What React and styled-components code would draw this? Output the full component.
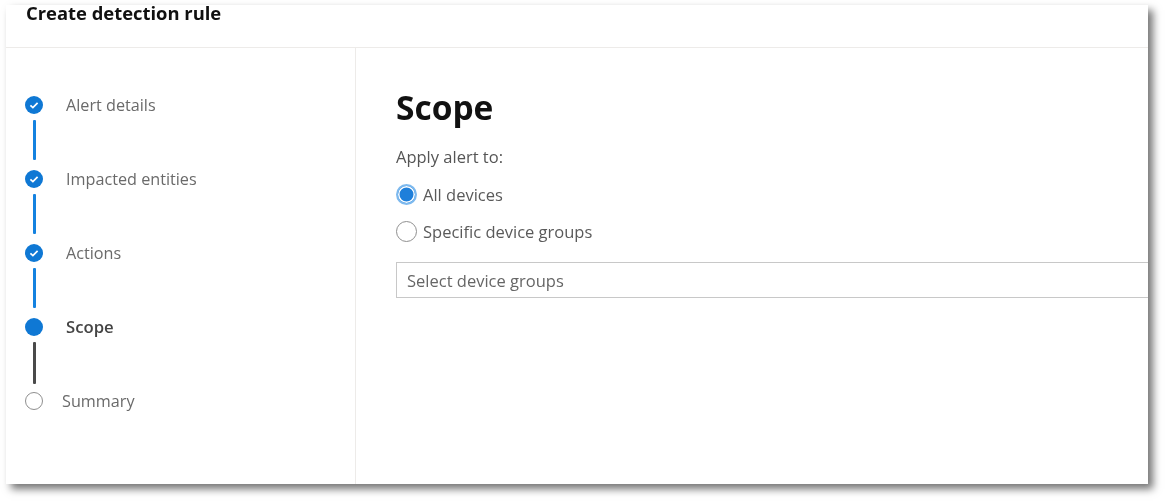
import styled, { createGlobalStyle } from 'styled-components'

const GlobalStyle = createGlobalStyle`
    html, body {
        margin: 0;
        padding: 0;
        background: #FFFFFF;
        overflow: hidden;
    }
`

const steps = [
    { label: 'Alert details', status: 'done' },
    { label: 'Impacted entities', status: 'done' },
    { label: 'Actions', status: 'done' },
    { label: 'Scope', status: 'current' },
    { label: 'Summary', status: 'todo' },
]

function StepIcon({ status }) {
    if (status === 'todo') return <SCHollowDot />
    return (
        <SCDot>
            {status === 'done' && (
                <svg width="12" height="12" viewBox="0 0 12 12" fill="none">
                    <path d="M2.4 6.3 L4.9 8.6 L9.6 3.8" stroke="#FFFFFF" strokeWidth="1.7" />
                </svg>
            )}
        </SCDot>
    )
}

export default function App() {
    return (
        <SCPage>
            <GlobalStyle />
            <SCCard>
                <SCHeader>Create detection rule</SCHeader>
                <SCBody>
                    <SCSidebar>
                        {steps.map((step, i) => (
                            <SCStep key={step.label}>
                                <SCMarker>
                                    <StepIcon status={step.status} />
                                    {i < steps.length - 1 && <SCLine $status={step.status} />}
                                </SCMarker>
                                <SCStepLabel $status={step.status}>{step.label}</SCStepLabel>
                            </SCStep>
                        ))}
                    </SCSidebar>
                    <SCMain>
                        <SCTitle>Scope</SCTitle>
                        <SCApply>Apply alert to:</SCApply>
                        <SCRadioRow>
                            <SCRadio $checked />
                            <SCRadioLabel>All devices</SCRadioLabel>
                        </SCRadioRow>
                        <SCRadioRow>
                            <SCRadio />
                            <SCRadioLabel>Specific device groups</SCRadioLabel>
                        </SCRadioRow>
                        <SCSelect>Select device groups</SCSelect>
                    </SCMain>
                </SCBody>
            </SCCard>
        </SCPage>
    )
}

const SCPage = styled.div`
    width: 1167px;
    height: 503px;
    box-sizing: border-box;
    padding: 5px 0 0 6px;
    font-family: 'Open Sans', 'Noto Sans', sans-serif;
`

const SCCard = styled.div`
    width: 1142px;
    height: 479px;
    display: flex;
    flex-direction: column;
    background: #FFFFFF;
    box-shadow: 5px 5px 8px rgba(0, 0, 0, 0.55);
`

const SCHeader = styled.div`
    height: 43px;
    flex-shrink: 0;
    box-sizing: border-box;
    padding-left: 20px;
    border-bottom: 1px solid #EDEBE9;
    font-size: 18.4px;
    font-weight: 700;
    line-height: 16px;
    color: #111111;
    filter: blur(0.5px);
`

const SCBody = styled.div`
    flex: 1;
    display: flex;
`

const SCSidebar = styled.div`
    width: 350px;
    flex-shrink: 0;
    box-sizing: border-box;
    border-right: 1px solid #EDEBE9;
    padding: 48px 0 0 19px;
    display: flex;
    flex-direction: column;
`

const SCStep = styled.div`
    display: flex;
    align-items: flex-start;
    height: 74px;
`

const SCMarker = styled.div`
    width: 18px;
    display: flex;
    flex-direction: column;
    align-items: center;
    gap: 6px;
`

const SCDot = styled.div`
    width: 18px;
    height: 18px;
    border-radius: 50%;
    background: #0F78D4;
    display: flex;
    align-items: center;
    justify-content: center;
`

const SCHollowDot = styled.div`
    width: 18px;
    height: 18px;
    box-sizing: border-box;
    border-radius: 50%;
    border: 1.5px solid #8F8F8F;
    background: #FFFFFF;
`

const SCLine = styled.div`
    width: 3px;
    height: ${props => (props.$status === 'current' ? '42px' : '40px')};
    border-radius: 1px;
    background: ${props => (props.$status === 'current' ? '#4A4A4A' : '#1482E0')};
`

const SCStepLabel = styled.div`
    margin-left: ${props => (props.$status === 'todo' ? '19px' : '23px')};
    font-size: ${props => (props.$status === 'current' ? '16.7px' : '16.2px')};
    line-height: 18px;
    font-weight: ${props => (props.$status === 'current' ? 600 : 400)};
    color: ${props => (props.$status === 'current' ? '#444444' : '#6A6A6A')};
    filter: blur(0.5px);
`

const SCMain = styled.div`
    flex: 1;
    min-width: 0;
    box-sizing: border-box;
    padding: 37px 0 0 40px;
    display: flex;
    flex-direction: column;
`

const SCTitle = styled.h1`
    margin: 0;
    font-size: 33.5px;
    font-weight: 700;
    line-height: 44px;
    color: #111111;
    filter: blur(0.4px);
`

const SCApply = styled.div`
    margin: 18px 0 9px;
    font-size: 16.5px;
    line-height: 20px;
    color: #555555;
    filter: blur(0.5px);
`

const SCRadioRow = styled.div`
    display: flex;
    align-items: center;
    height: 37px;
    gap: 6px;
`

const SCRadio = styled.div`
    width: 21px;
    height: 21px;
    box-sizing: border-box;
    border-radius: 50%;
    border: ${props => (props.$checked ? '2px solid #7DB9EE' : '1.5px solid #8F8F8F')};
    background: ${props => (props.$checked ? '#1E7FDA' : '#FFFFFF')};
    box-shadow: ${props => (props.$checked ? 'inset 0 0 0 1.5px #FFFFFF' : 'none')};
`

const SCRadioLabel = styled.span`
    font-size: 16.5px;
    color: #5A5A5A;
    filter: blur(0.5px);
`

const SCSelect = styled.div`
    margin-top: 12px;
    height: 36px;
    box-sizing: border-box;
    border: 1px solid #C8C8C8;
    border-right: none;
    padding-left: 10px;
    display: flex;
    align-items: center;
    font-size: 16.5px;
    color: #666666;
    filter: blur(0.5px);
`
